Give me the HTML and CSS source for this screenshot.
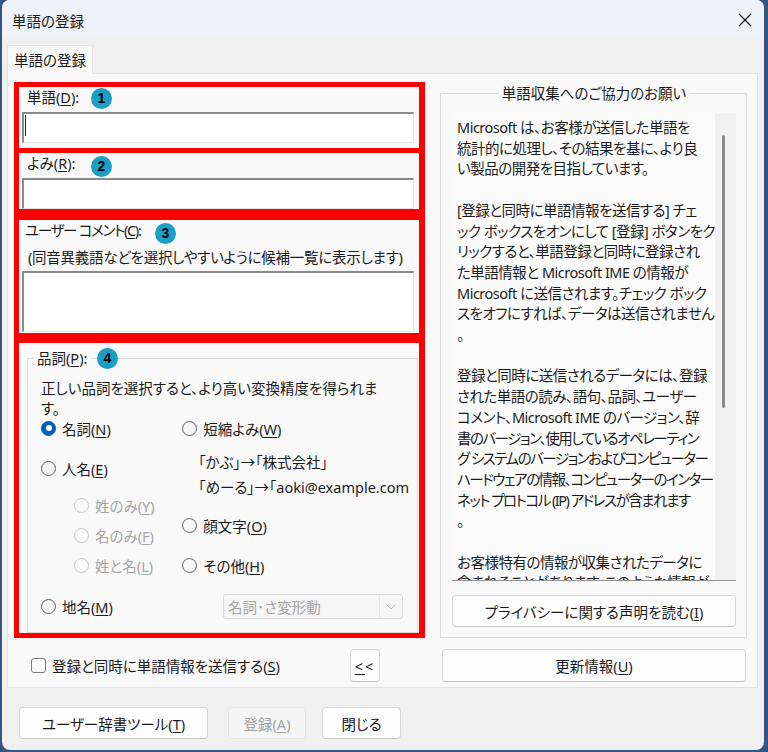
FILE: index.html
```html
<!DOCTYPE html>
<html lang="ja">
<head>
  <meta charset="UTF-8">
  <title>単語の登録</title>
  <link rel="stylesheet" href="styles.css">
</head>
<body>
  <div class="window">
    <div class="titlebar">
      <span class="title">単語の登録</span>
      <svg class="close" width="14" height="14" viewBox="0 0 14 14">
        <path d="M1 1 L13 13 M13 1 L1 13" stroke="#1a1a1a" stroke-width="1.2" fill="none"/>
      </svg>
    </div>

    <div class="content">
      <div class="tabs"><div class="tab">単語の登録</div></div>

      <div class="panel">
        <div class="main">
          <!-- red marked area -->
          <div class="marks">
            <div class="mark m1">
              <div class="label">単語(<u>D</u>):</div>
              <div class="field"><span class="caret"></span></div>
              <span class="badge b1">1</span>
            </div>
            <div class="mark m2">
              <div class="label">よみ(<u>R</u>):</div>
              <div class="field"></div>
              <span class="badge b2">2</span>
            </div>
            <div class="mark m3">
              <div class="label label-c">ユーザー コメント(<u>C</u>):</div>
              <div class="note">(同音異義語などを選択しやすいように候補一覧に表示します)</div>
              <div class="field area"></div>
              <span class="badge b3">3</span>
            </div>
            <div class="mark m4">
              <fieldset class="group pos">
                <legend>品詞(<u>P</u>):</legend>
                <div class="desc">正しい品詞を選択すると、より高い変換精度を得られま<br>す。</div>
                <div class="cols">
                  <div class="col col-l">
                    <div class="opt"><span class="radio on"></span><span>名詞(<u>N</u>)</span></div>
                    <div class="opt o-jin"><span class="radio"></span><span>人名(<u>E</u>)</span></div>
                    <div class="opt sub o-sei"><span class="radio off"></span><span>姓のみ(<u>Y</u>)</span></div>
                    <div class="opt sub o-mei"><span class="radio off"></span><span>名のみ(<u>F</u>)</span></div>
                    <div class="opt sub o-mei"><span class="radio off"></span><span>姓と名(<u>L</u>)</span></div>
                  </div>
                  <div class="col col-r">
                    <div class="opt"><span class="radio"></span><span>短縮よみ(<u>W</u>)</span></div>
                    <div class="ex ex1">「かぶ」→「株式会社」</div>
                    <div class="ex ex2">「めーる」→「aoki@example.com</div>
                    <div class="opt o-kao"><span class="radio"></span><span>顔文字(<u>O</u>)</span></div>
                    <div class="opt o-other"><span class="radio"></span><span>その他(<u>H</u>)</span></div>
                  </div>
                </div>
                <div class="lastrow">
                  <div class="opt o-chi"><span class="radio"></span><span>地名(<u>M</u>)</span></div>
                  <div class="combo">
                    <span class="combo-text">名詞･さ変形動</span>
                    <span class="combo-btn">
                      <svg width="10" height="6" viewBox="0 0 10 6"><path d="M0.5 0.5 L5 5 L9.5 0.5" stroke="#b4b4b4" stroke-width="1" fill="none"/></svg>
                    </span>
                  </div>
                </div>
              </fieldset>
              <span class="badge b4">4</span>
            </div>
          </div>

          <div class="side">
            <fieldset class="group info">
              <legend>単語収集へのご協力のお願い</legend>
              <div class="scrollbox">
                <div class="scrolltext">
                  <p>Microsoft は、お客様が送信した単語を<br>統計的に処理し、その結果を基に、より良<br>い製品の開発を目指しています。</p>
                  <p>[登録と同時に単語情報を送信する] チェ<br>ック ボックスをオンにして [登録] ボタンをク<br>リックすると、単語登録と同時に登録され<br>た単語情報と Microsoft IME の情報が<br>Microsoft に送信されます。チェック ボック<br>スをオフにすれば、データは送信されません<br>。</p>
                  <p>登録と同時に送信されるデータには、登録<br>された単語の読み、語句、品詞、ユーザー<br>コメント、Microsoft IME のバージョン、辞<br><span class="t">書のバージョン、使用しているオペレーティン</span><br><span class="t">グ システムのバージョンおよびコンピューター</span><br><span class="t">ハードウェアの情報、コンピューターのインター</span><br><span class="t">ネット プロトコル (IP) アドレスが含まれます</span><br>。</p>
                  <p>お客様特有の情報が収集されたデータに<br>含まれることがあります。このような情報が</p>
                </div>
                <div class="track"><div class="thumb"></div></div>
              </div>
              <button class="btn privacy">プライバシーに関する声明を読む(<u>I</u>)</button>
            </fieldset>
          </div>
        </div>

        <div class="actions">
          <div class="send">
            <span class="check"></span>
            <span class="send-label">登録と同時に単語情報を送信する(<u>S</u>)</span>
            <button class="btn collapse"><u>&lt;</u>&lt;</button>
          </div>
          <button class="btn update">更新情報(<u>U</u>)</button>
        </div>
      </div>

      <div class="footer">
        <button class="btn tool">ユーザー辞書ツール(<u>T</u>)</button>
        <button class="btn reg" disabled>登録(<u>A</u>)</button>
        <button class="btn close-btn">閉じる</button>
      </div>
    </div>
  </div>
</body>
</html>
```

FILE: styles.css
```css
body {
  margin: 0;
  background: #33557f;
  font-family: "Noto Sans", "Noto Sans CJK JP", sans-serif;
  font-size: 14.5px;
  color: #1b1b1b;
  font-feature-settings: "palt";
}

u {
  text-decoration-thickness: 1px;
  text-underline-offset: 2px;
}

.window {
  margin-left: 2px;
  width: 762px;
  height: 750px;
  border-radius: 8px;
  overflow: hidden;
  background: #f0f0f0;
}

.titlebar {
  height: 38px;
  background: #eef3f9;
  display: flex;
  align-items: center;
  justify-content: space-between;
  padding: 2px 12px 0 10px;
  box-sizing: border-box;
}

.content {
  padding: 7px 6px 0 5px;
}

.tabs {
  display: flex;
}

.tab {
  position: relative;
  z-index: 1;
  width: 86px;
  height: 29px;
  margin-bottom: -1px;
  box-sizing: border-box;
  border: 1px solid #e3e3e3;
  border-bottom: none;
  background: #f9f9f9;
  padding-left: 6px;
  line-height: 28px;
}

.panel {
  height: 615px;
  box-sizing: border-box;
  border: 1px solid #e3e3e3;
  background: #f9f9f9;
  padding: 8px 9px 0 6px;
}

.main {
  display: flex;
  align-items: flex-start;
  height: 556px;
}

/* red marks */
.marks {
  width: 411px;
  height: 556px;
  box-sizing: border-box;
  background: #ff0000;
  padding: 5px 6px 5px 5px;
  display: flex;
  flex-direction: column;
}

.mark {
  position: relative;
  background: #f9f9f9;
}

.m1 { height: 61px; }
.m2 { height: 56px; margin-top: 5px; }
.m3 { height: 113px; margin-top: 11px; }
.m4 { height: 290px; margin-top: 10px; }

.label {
  height: 20px;
  line-height: 20px;
  padding-left: 8px;
}

.label-c {
  padding-left: 6px;
  letter-spacing: -1.3px;
}

.note {
  margin-top: 7px;
  height: 20px;
  line-height: 20px;
  padding-left: 9px;
  white-space: nowrap;
  letter-spacing: -0.25px;
}

.field {
  margin: 5px 0 0 3px;
  width: 392px;
  height: 31px;
  box-sizing: border-box;
  background: #fff;
  border-style: solid;
  border-width: 2px 1px 1px 2px;
  border-color: #8a8a8a #e4e4e4 #e4e4e4 #8a8a8a;
}

.field.area {
  margin-top: 4px;
  height: 61px;
}

.caret {
  display: block;
  width: 1px;
  height: 21px;
  margin: 1px 0 0 1px;
  background: #222;
}

.badge {
  position: absolute;
  width: 21px;
  height: 21px;
  border-radius: 50%;
  background: #1aa0c6;
  color: #000;
  font-family: "Liberation Sans", sans-serif;
  font-weight: bold;
  font-size: 14px;
  line-height: 21px;
  text-align: center;
}

.b1 { left: 72px; top: 1px; }
.b2 { left: 72px; top: 3px; }
.b3 { left: 136px; top: 3px; }
.b4 { left: 78px; top: 5px; }

/* group boxes */
.group {
  margin: 0;
  border: 1px solid #dcdcdc;
  min-width: 0;
}

.group legend {
  padding: 0 3px;
  line-height: 20px;
}

.pos {
  margin: 5px 1px 0 8px;
  height: 285px;
  box-sizing: border-box;
  padding: 0 8px 0 6px;
}

.desc {
  margin-top: 10px;
  padding-left: 7px;
  line-height: 20px;
  white-space: nowrap;
}

.cols {
  display: flex;
}

.col-l {
  width: 143px;
  padding-left: 7px;
}

.opt {
  display: flex;
  align-items: center;
  gap: 6px;
  height: 20px;
  white-space: nowrap;
}

.o-jin { margin-top: 20px; }
.sub { padding-left: 33px; color: #a6a6a6; }
.o-sei { margin-top: 17px; }
.o-mei { margin-top: 10px; }

.ex {
  height: 20px;
  line-height: 20px;
  padding-left: 16px;
  white-space: nowrap;
}

.ex1 { margin-top: 14px; }
.ex2 { margin-top: 5px; }
.o-kao { margin-top: 18px; }
.o-other { margin-top: 20px; }

.radio {
  width: 15px;
  height: 15px;
  flex: none;
  box-sizing: border-box;
  border-radius: 50%;
  border: 1px solid #5e5e5e;
  background: #f6f6f6;
  display: flex;
  align-items: center;
  justify-content: center;
}

.radio.on {
  background: #005fb8;
  border-color: #005fb8;
}

.radio.on::after {
  content: "";
  width: 6px;
  height: 6px;
  border-radius: 50%;
  background: #fff;
}

.radio.off {
  border-color: #c4c4c4;
  background: #fafafa;
}

.lastrow {
  display: flex;
  align-items: center;
  margin-top: 19px;
  height: 25px;
}

.o-chi {
  width: 182px;
  padding-left: 7px;
}

.combo {
  width: 180px;
  height: 25px;
  box-sizing: border-box;
  border: 1px solid #dadada;
  border-radius: 3px;
  background: #f6f6f6;
  color: #a3a3a3;
  display: flex;
  align-items: center;
}

.combo-text {
  flex: 1;
  padding-left: 4px;
  white-space: nowrap;
}

.combo-btn {
  width: 22px;
  height: 23px;
  border-left: 1px solid #e6e6e6;
  display: flex;
  align-items: center;
  justify-content: center;
}

/* right side */
.side {
  margin-left: 15px;
  width: 307px;
}

.info {
  margin-top: 1px;
  padding: 10px 10px 10px 11px;
}

.info legend {
  margin: 0 auto;
}

.scrollbox {
  height: 468px;
  box-sizing: border-box;
  border-bottom: 1px solid #8f8f8f;
  background: #fbfbfb;
  display: flex;
  overflow: hidden;
}

.scrolltext {
  width: 263px;
  flex: none;
  box-sizing: border-box;
  padding: 4px 0 0 5px;
  line-height: 20.7px;
  white-space: nowrap;
  letter-spacing: -0.5px;
  overflow: hidden;
}

.scrolltext p {
  margin: 0 0 20.7px;
}

.scrolltext .t {
  letter-spacing: -1.5px;
}

.track {
  width: 22px;
  background: #f1f1f1;
  padding-top: 22px;
}

.thumb {
  margin-left: 7px;
  width: 3px;
  height: 273px;
  border-radius: 2px;
  background: #8b8b8b;
}

/* buttons */
.btn {
  font: inherit;
  color: #1b1b1b;
  background: #fdfdfd;
  border: 1px solid #d6d6d6;
  border-bottom-color: #c6c6c6;
  border-radius: 4px;
  padding: 0;
  white-space: nowrap;
}

.btn:disabled {
  background: #f5f5f5;
  border-color: #e6e6e6;
  color: #a2a2a2;
}

.privacy {
  margin-top: 14px;
  width: 284px;
  height: 32px;
}

.actions {
  display: flex;
  margin-top: 11px;
  height: 33px;
}

.send {
  width: 411px;
  display: flex;
  align-items: center;
}

.check {
  margin-left: 17px;
  width: 15px;
  height: 15px;
  box-sizing: border-box;
  border: 1px solid #7a7a7a;
  border-radius: 3px;
  background: #fbfbfb;
}

.send-label {
  margin-left: 6px;
  white-space: nowrap;
}

.collapse {
  margin-left: auto;
  margin-right: 45px;
  width: 30px;
  height: 33px;
  letter-spacing: 2px;
}

.update {
  margin-left: 17px;
  width: 304px;
  height: 33px;
}

.footer {
  display: flex;
  padding: 19px 0 0 12px;
}

.footer .btn {
  height: 32px;
}

.tool { width: 189px; }
.reg { width: 78px; margin-left: 20px; }
.close-btn { width: 79px; margin-left: 16px; }
```
